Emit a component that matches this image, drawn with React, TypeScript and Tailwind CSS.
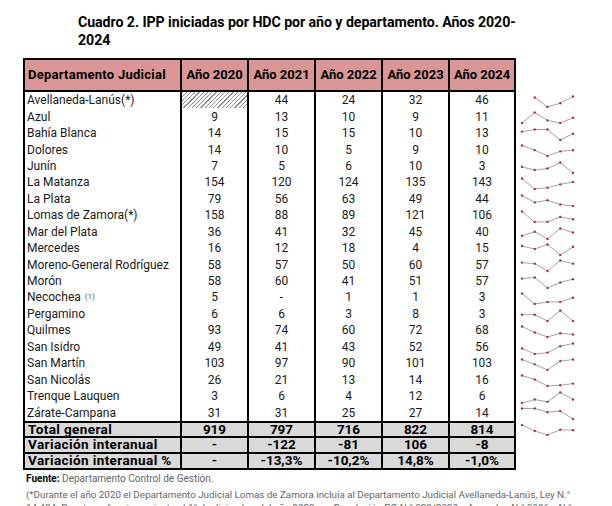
import React from "react";

type Val = number | "-" | "hatch";

const rows: { name: React.ReactNode; vals: Val[] }[] = [
  { name: "Avellaneda-Lanús(*)", vals: ["hatch", 44, 24, 32, 46] },
  { name: "Azul", vals: [9, 13, 10, 9, 11] },
  { name: "Bahía Blanca", vals: [14, 15, 15, 10, 13] },
  { name: "Dolores", vals: [14, 10, 5, 9, 10] },
  { name: "Junín", vals: [7, 5, 6, 10, 3] },
  { name: "La Matanza", vals: [154, 120, 124, 135, 143] },
  { name: "La Plata", vals: [79, 56, 63, 49, 44] },
  { name: "Lomas de Zamora(*)", vals: [158, 88, 89, 121, 106] },
  { name: "Mar del Plata", vals: [36, 41, 32, 45, 40] },
  { name: "Mercedes", vals: [16, 12, 18, 4, 15] },
  { name: "Moreno-General Rodríguez", vals: [58, 57, 50, 60, 57] },
  { name: "Morón", vals: [58, 60, 41, 51, 57] },
  {
    name: (
      <>
        <span>Necochea</span>
        <span className="ml-[4px] text-[8px] text-[#555]">(1)</span>
      </>
    ),
    vals: [5, "-", 1, 1, 3],
  },
  { name: "Pergamino", vals: [6, 6, 3, 8, 3] },
  { name: "Quilmes", vals: [93, 74, 60, 72, 68] },
  { name: "San Isidro", vals: [49, 41, 43, 52, 56] },
  { name: "San Martín", vals: [103, 97, 90, 101, 103] },
  { name: "San Nicolás", vals: [26, 21, 13, 14, 16] },
  { name: "Trenque Lauquen", vals: [3, 6, 4, 12, 6] },
  { name: "Zárate-Campana", vals: [31, 31, 25, 27, 14] },
];

function Spark({ vals, h, top = 4.5, bottom = 15 }: { vals: Val[]; h: number; top?: number; bottom?: number }) {
  const pts: { x: number; v: number }[] = [];
  vals.forEach((v, i) => {
    if (v === "hatch") return;
    pts.push({ x: 6 + i * 12.75, v: v === "-" ? 0 : v });
  });
  const nums = pts.map((p) => p.v);
  const min = Math.min(...nums);
  const max = Math.max(...nums);
  const ys = pts.map((p) => bottom - ((p.v - min) / (max - min || 1)) * (bottom - top));
  const d = pts.map((p, i) => `${i === 0 ? "M" : "L"}${p.x},${ys[i]}`).join(" ");
  return (
    <svg width={66} height={h} className="block shrink-0">
      <path d={d} fill="none" stroke="#8a8a8a" strokeWidth={0.8} />
      {pts.map((p, i) => (
        <circle key={i} cx={p.x} cy={ys[i]} r={1.2} fill="#a8323a" />
      ))}
    </svg>
  );
}

const yearCols = ["Año 2020", "Año 2021", "Año 2022", "Año 2023", "Año 2024"];

export default function App() {
  return (
    <div className="w-[612px] h-[506px] overflow-hidden bg-white font-[Roboto,sans-serif] text-[#1a1a1a] pl-[23px] pt-[13px]">
      <div className="ml-[55px] text-[14.2px] leading-[18px] font-bold text-black tracking-[-0.005em]">
        Cuadro 2. IPP iniciadas por HDC por año y departamento. Años 2020-
        <br />
        2024
      </div>

      <div className="mt-[9px] flex flex-col">
        {/* header */}
        <div className="flex">
          <div className="flex h-[34px]">
            <div className="w-[157px] border-2 border-r-0 border-black bg-[#da9694] flex items-center pl-[3px] text-[13px] font-bold text-black tracking-[0.02em]">
              Departamento Judicial
            </div>
            {yearCols.map((y, i) => (
              <div
                key={y}
                className={`${i === 4 ? "w-[68px] border-r-2" : "w-[67px] border-r-0"} border-2 border-black bg-[#da9694] flex items-center justify-center text-[13px] font-bold text-black`}
              >
                {y}
              </div>
            ))}
          </div>
        </div>

        {/* body */}
        {rows.map((r, ri) => (
          <div key={ri} className="flex h-[16.45px]">
            <div className="w-[157px] border-l-2 border-black flex items-center pl-[2px] text-[12px] leading-none whitespace-nowrap">
              {r.name}
            </div>
            {r.vals.map((v, i) => (
              <div
                key={i}
                className={`${i === 4 ? "w-[68px] border-r-2" : "w-[67px]"} border-l-2 border-black flex items-center justify-center text-[12px] leading-none`}
              >
                {v === "hatch" ? (
                  <div className="w-full h-full bg-[repeating-linear-gradient(135deg,#6e6e6e_0px,#6e6e6e_0.8px,transparent_0.8px,transparent_3px)] opacity-80" />
                ) : (
                  v
                )}
              </div>
            ))}
            <Spark vals={r.vals} h={16.45} />
          </div>
        ))}

        {/* totals */}
        {[
          { name: "Total general", vals: ["919", "797", "716", "822", "814"], spark: [919, 797, 716, 822, 814] as Val[] },
          { name: "Variación interanual", vals: ["-", "-122", "-81", "106", "-8"] },
          { name: "Variación interanual %", vals: ["-", "-13,3%", "-10,2%", "14,8%", "-1,0%"] },
        ].map((r, ri) => (
          <div key={ri} className="flex">
            <div className={`flex ${ri === 0 ? "h-[17px] border-t-2" : "h-[16px]"} border-b-2 border-black`}>
              <div className="w-[157px] border-l-2 border-black bg-[#d9d9d9] flex items-center pl-[3px] text-[13.5px] leading-none font-bold text-black tracking-[0.03em] whitespace-nowrap">
                {r.name}
              </div>
              {r.vals.map((v, i) => (
                <div
                  key={i}
                  className={`${i === 4 ? "w-[68px] border-r-2" : "w-[67px]"} border-l-2 border-black bg-[#d9d9d9] flex items-center justify-center text-[13.5px] leading-none font-bold text-black`}
                >
                  {v}
                </div>
              ))}
            </div>
            {r.spark ? <Spark vals={r.spark} h={17} top={4} bottom={14} /> : null}
          </div>
        ))}
      </div>

      <div className="mt-[2px] pl-[3px] text-[10px] leading-[14px] text-[#666] whitespace-nowrap">
        <span className="font-bold text-black">Fuente:</span> Departamento Control de Gestión.
      </div>
      <div className="mt-[2px] pl-[3px] text-[9.8px] leading-[13px] text-[#666] whitespace-nowrap">
        (*Durante el año 2020 el Departamento Judicial Lomas de Zamora incluía al Departamento Judicial Avellaneda-Lanús, Ley N.°
        <br />
        14.484. Puesto en funcionamiento el 1° de diciembre del año 2020 por Resolución PG N.° 823/2020 y Acuerdos N.° 3986 y N.°
      </div>
    </div>
  );
}
